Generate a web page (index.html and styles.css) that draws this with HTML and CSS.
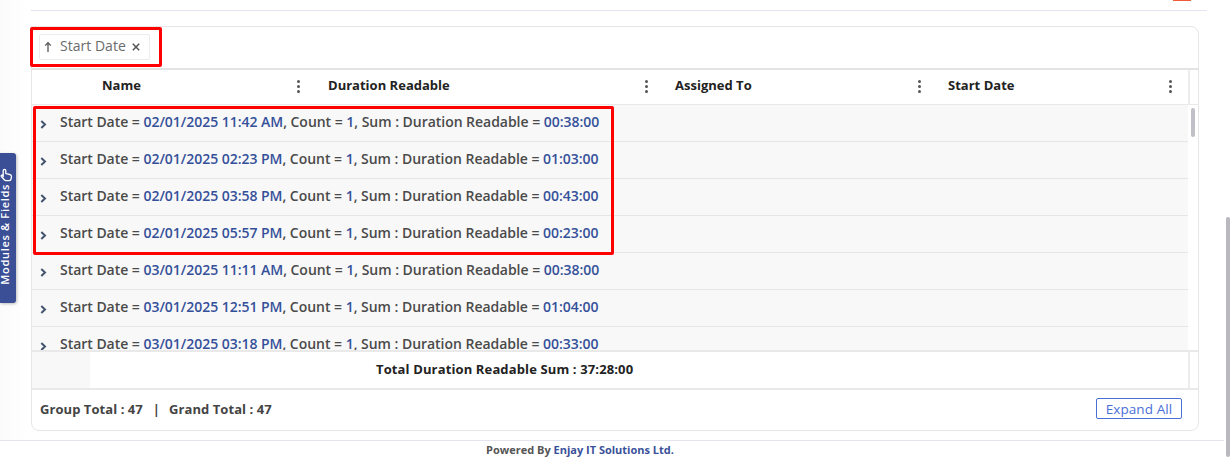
FILE: index.html
```html
<!DOCTYPE html>
<html lang="en">
<head>
<meta charset="utf-8">
<title>Start Date grouping</title>
<link rel="stylesheet" href="styles.css">
</head>
<body>
<div class="page">
  <div class="top-rule"><span class="orange"></span></div>
  <section class="card">
    <div class="toolbar">
      <div class="chip">
        <svg class="arrow" width="10" height="12" viewBox="0 0 10 12"><path d="M5 11V2M2.2 4.6 5 1.6l2.8 3" fill="none" stroke="#555" stroke-width="1.3"/></svg>
        <span class="chip-text">Start Date</span>
        <svg class="close" width="8" height="8" viewBox="0 0 8 8"><path d="M.8.8l6.4 6.4M7.2.8.8 7.2" stroke="#555" stroke-width="1.5"/></svg>
      </div>
    </div>
    <div class="head">
      <div class="cols">
        <div class="col c1"><span>Name</span><i class="dots"></i></div>
        <div class="col c2"><span>Duration Readable</span><i class="dots"></i></div>
        <div class="col c3"><span>Assigned To</span><i class="dots"></i></div>
        <div class="col c4"><span>Start Date</span><i class="dots"></i></div>
      </div>
      <div class="gutter"></div>
    </div>
    <div class="body">
      <div class="rows">
        <div class="row"><svg class="chev" width="7" height="9" viewBox="0 0 7 9"><path d="M1.3 1 5 4.5 1.3 8" fill="none" stroke="#44546f" stroke-width="2"/></svg><p>Start Date = <b>02/01/2025 11:42 AM</b>, Count = <b>1</b>, Sum : Duration Readable = <b>00:38:00</b></p></div>
        <div class="row"><svg class="chev" width="7" height="9" viewBox="0 0 7 9"><path d="M1.3 1 5 4.5 1.3 8" fill="none" stroke="#44546f" stroke-width="2"/></svg><p>Start Date = <b>02/01/2025 02:23 PM</b>, Count = <b>1</b>, Sum : Duration Readable = <b>01:03:00</b></p></div>
        <div class="row"><svg class="chev" width="7" height="9" viewBox="0 0 7 9"><path d="M1.3 1 5 4.5 1.3 8" fill="none" stroke="#44546f" stroke-width="2"/></svg><p>Start Date = <b>02/01/2025 03:58 PM</b>, Count = <b>1</b>, Sum : Duration Readable = <b>00:43:00</b></p></div>
        <div class="row"><svg class="chev" width="7" height="9" viewBox="0 0 7 9"><path d="M1.3 1 5 4.5 1.3 8" fill="none" stroke="#44546f" stroke-width="2"/></svg><p>Start Date = <b>02/01/2025 05:57 PM</b>, Count = <b>1</b>, Sum : Duration Readable = <b>00:23:00</b></p></div>
        <div class="row"><svg class="chev" width="7" height="9" viewBox="0 0 7 9"><path d="M1.3 1 5 4.5 1.3 8" fill="none" stroke="#44546f" stroke-width="2"/></svg><p>Start Date = <b>03/01/2025 11:11 AM</b>, Count = <b>1</b>, Sum : Duration Readable = <b>00:38:00</b></p></div>
        <div class="row"><svg class="chev" width="7" height="9" viewBox="0 0 7 9"><path d="M1.3 1 5 4.5 1.3 8" fill="none" stroke="#44546f" stroke-width="2"/></svg><p>Start Date = <b>03/01/2025 12:51 PM</b>, Count = <b>1</b>, Sum : Duration Readable = <b>01:04:00</b></p></div>
        <div class="row"><svg class="chev" width="7" height="9" viewBox="0 0 7 9"><path d="M1.3 1 5 4.5 1.3 8" fill="none" stroke="#44546f" stroke-width="2"/></svg><p>Start Date = <b>03/01/2025 03:18 PM</b>, Count = <b>1</b>, Sum : Duration Readable = <b>00:33:00</b></p></div>
      </div>
      <div class="track"><span class="thumb"></span></div>
    </div>
    <div class="total">
      <div class="total-pad"></div>
      <div class="total-text">Total Duration Readable Sum : 37:28:00</div>
      <div class="gutter"></div>
    </div>
    <div class="foot">
      <div class="counts"><span>Group Total : 47</span><span class="bar">|</span><span>Grand Total : 47</span></div>
      <button class="expand">Expand All</button>
    </div>
  </section>
  <footer class="powered">
    <div class="powered-text">Powered By <a>Enjay IT Solutions Ltd.</a></div>
  </footer>
</div>
<div class="side-tab">
  <span class="side-label">Modules &amp; Fields</span>
  <svg class="hand" width="13" height="15" viewBox="0 0 13 15"><path d="M3.2 9.2V2.6a1.3 1.3 0 0 1 2.6 0V5.6l4 .9c1 .2 1.7 1 1.7 2l-.4 2.4c-.1 1-.9 1.7-1.9 1.7H6c-.7 0-1.3-.3-1.7-.9L1.4 8.6c-.7-1 .6-2.1 1.5-1.2z" fill="none" stroke="#fff" stroke-width="1.3"/></svg>
</div>
<div class="mark mark-chip"></div>
<div class="mark mark-rows"></div>
<div class="page-scroll"></div>
</body>
</html>
```
FILE: styles.css
```css
* { box-sizing: border-box; }
html, body { margin: 0; height: 464px; overflow: hidden; background: #fff; }
body { font-family: "Open Sans", "Noto Sans", sans-serif; color: #444; position: relative; }
.page { width: 1224px; height: 441px; padding: 0 0 0 31px; background: linear-gradient(to right, #fbfbfb, #fff 28px); display: flex; flex-direction: column; }
.top-rule { width: 1176px; height: 11px; border-bottom: 1px solid #e6e4f2; position: relative; flex: none; }
.orange { position: absolute; left: 1142px; top: 0; width: 18px; height: 1px; background: #ee5a35; }
.card { width: 1168px; height: 405px; margin-top: 15px; border: 1px solid #e6e6e6; border-radius: 0 8px 8px 8px; background: #fff; display: flex; flex-direction: column; flex: none; }
.toolbar { height: 43px; flex: none; border-bottom: 2px solid #e3e3e3; padding: 7px 7px 0 7px; }
.chip { width: 111px; height: 26px; border: 1px solid #ececec; border-radius: 2px; display: flex; align-items: center; padding-left: 3px; font-size: 14px; letter-spacing: .02px; color: #6b6b6b; }
.arrow { flex: none; }
.chip-text { margin: 0 0 4px 7px; width: 72px; white-space: nowrap; }
.close { flex: none; }
.head { height: 35px; flex: none; display: flex; border-bottom: 1px solid #e9e9e9; }
.cols { width: 1156px; display: flex; flex: none; }
.gutter { flex: 1; border-left: 2px solid #ececec; }
.col { display: flex; align-items: center; justify-content: space-between; font-size: 13px; letter-spacing: .01px; font-weight: 700; color: #222; padding-bottom: 5px; white-space: nowrap; }
.c1 { width: 296px; padding-left: 70px; }
.c2 { width: 347px; }
.c3 { width: 273px; }
.c4 { width: 240px; }
.c1 .dots { margin-right: 28px; }
.c2 .dots { margin-right: 27px; }
.c3 .dots { margin-right: 27px; }
.c4 .dots { margin-right: 16px; }
.dots, .dots::before, .dots::after { display: block; width: 3px; height: 3px; border-radius: 50%; background: #555; }
.dots { position: relative; flex: none; top: 2px; }
.dots::before, .dots::after { content: ""; position: absolute; left: 0; }
.dots::before { top: -5px; }
.dots::after { top: 5px; }
.body { height: 247px; flex: none; display: flex; overflow: hidden; border-bottom: 2px solid #e9e9e9; }
.rows { width: 1156px; flex: none; overflow: hidden; }
.row { height: 37px; background: #f8f8f8; border-bottom: 1px solid #e6e6e6; display: flex; align-items: center; padding-left: 8px; }
.row p { margin: 0 0 4px 13px; font-size: 14px; letter-spacing: -.03px; font-weight: 600; color: #4a4a4a; white-space: nowrap; }
.row b { font-weight: 600; color: #35509a; }
.chev { flex: none; margin-top: 3px; }
.track { flex: 1; position: relative; }
.thumb { position: absolute; left: 3px; top: 3px; width: 4px; height: 29px; border-radius: 2px; background: #c0c0c6; }
.total { height: 38px; flex: none; display: flex; border-bottom: 2px solid #e9e9e9; }
.total-pad { width: 58px; background: #f8f8f8; flex: none; }
.total-text { width: 1098px; flex: none; padding-left: 286px; font-size: 13px; letter-spacing: .13px; font-weight: 700; color: #222; line-height: 34px; white-space: nowrap; }
.foot { flex: 1; display: flex; align-items: center; justify-content: space-between; padding: 0 16px 3px 8px; }
.counts { font-size: 13px; letter-spacing: .06px; font-weight: 700; color: #444; display: flex; }
.bar { margin: 0 9px 0 10px; }
.expand { width: 86px; height: 21px; padding: 0; border: 1px solid #4a70d8; border-radius: 2px; background: #fff; color: #4a70d8; font: 400 13.5px "Open Sans", sans-serif; letter-spacing: .1px; }
.powered { height: 23px; margin: 9px 0 0 -31px; padding-right: 64px; border-top: 1px solid #e4e4f0; flex: none; text-align: center; background: #fff; width: 1224px; }
.powered-text { font-size: 11px; font-weight: 700; color: #555; line-height: 18px; }
.powered a { color: #3a5199; }
.side-tab { position: absolute; left: 0; top: 153px; width: 16px; height: 150px; background: #3a4f96; border-radius: 0 3px 3px 0; box-shadow: 1px 1px 3px rgba(0,0,0,.25); }
.side-label { writing-mode: vertical-rl; transform: rotate(180deg); color: #fff; font-size: 11px; letter-spacing: .68px; font-weight: 600; white-space: nowrap; position: absolute; bottom: 18px; left: -3px; }
.hand { position: absolute; top: 15px; left: 0; }
.mark { position: absolute; border: 3px solid #f00; border-radius: 2px; pointer-events: none; }
.mark-chip { left: 30px; top: 27px; width: 132px; height: 40px; }
.mark-rows { left: 33px; top: 106px; width: 581px; height: 149px; }
.page-scroll { position: absolute; left: 1226px; top: 217px; width: 4px; height: 240px; border-radius: 2px; background: #b8b8be; }
```
